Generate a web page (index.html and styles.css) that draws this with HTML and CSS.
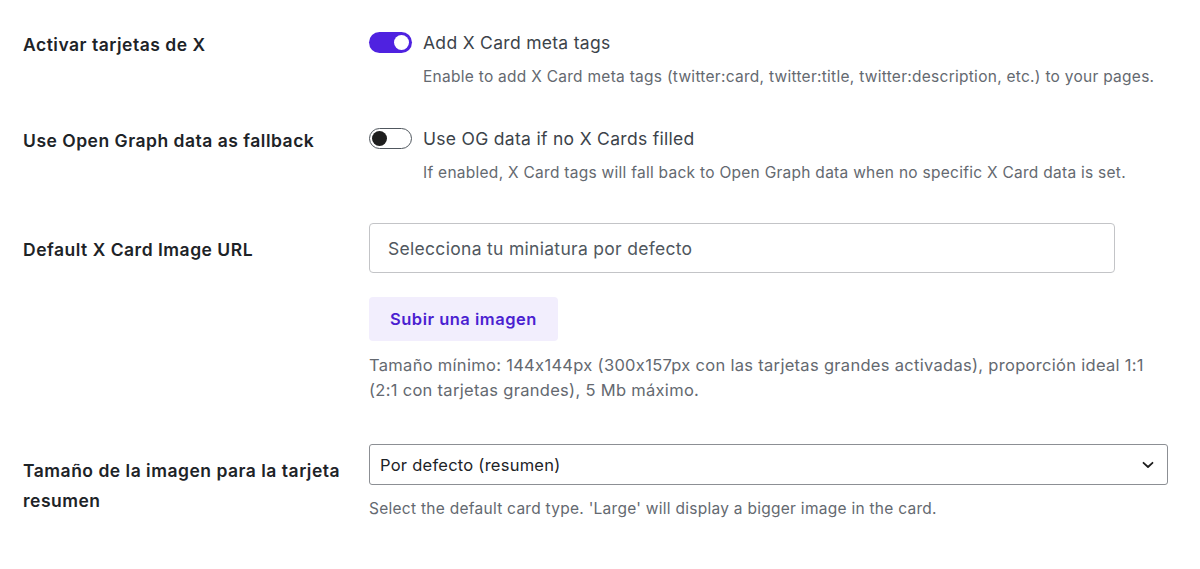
FILE: index.html
```html
<!DOCTYPE html>
<html lang="es">
<head>
<meta charset="utf-8">
<title>X Cards</title>
<link rel="stylesheet" href="styles.css">
</head>
<body>
<main class="form">
  <div class="row row-1">
    <div class="label">Activar tarjetas de X</div>
    <div class="field">
      <div class="toggle-line">
        <span class="toggle on"><span class="knob"></span></span>
        <span class="toggle-text">Add X Card meta tags</span>
      </div>
      <p class="desc indent">Enable to add X Card meta tags (twitter:card, twitter:title, twitter:description, etc.) to your pages.</p>
    </div>
  </div>
  <div class="row row-2">
    <div class="label">Use Open Graph data as fallback</div>
    <div class="field">
      <div class="toggle-line">
        <span class="toggle off"><span class="knob"></span></span>
        <span class="toggle-text">Use OG data if no X Cards filled</span>
      </div>
      <p class="desc indent">If enabled, X Card tags will fall back to Open Graph data when no specific X Card data is set.</p>
    </div>
  </div>
  <div class="row row-3">
    <div class="label">Default X Card Image URL</div>
    <div class="field">
      <div class="text-input">Selecciona tu miniatura por defecto</div>
      <button class="upload" type="button">Subir una imagen</button>
      <p class="desc long">Tamaño mínimo: 144x144px (300x157px con las tarjetas grandes activadas), proporción ideal 1:1 (2:1 con tarjetas grandes), 5 Mb máximo.</p>
    </div>
  </div>
  <div class="row row-4">
    <div class="label">Tamaño de la imagen para la tarjeta resumen</div>
    <div class="field">
      <div class="select">
        <span>Por defecto (resumen)</span>
        <svg class="chev" width="12" height="8" viewBox="0 0 12 8"><path d="M1.5 1.8 L6 6 L10.5 1.8" fill="none" stroke="#1e1e1e" stroke-width="1.8" stroke-linecap="round" stroke-linejoin="round"/></svg>
      </div>
      <p class="desc">Select the default card type. 'Large' will display a bigger image in the card.</p>
    </div>
  </div>
</main>
</body>
</html>
```

FILE: styles.css
```css
* { box-sizing: border-box; }
html, body { margin: 0; background: #ffffff; }
body {
  font-family: Inter, "Noto Sans", "Liberation Sans", sans-serif;
  font-feature-settings: "calt" 0;
  color: #1d2327;
  padding: 0 0 0 23px;
}
.form { display: flex; flex-direction: column; }
.row {
  display: grid;
  grid-template-columns: 346px 1fr;
}
.label {
  font-size: 17.5px;
  font-weight: 600;
  letter-spacing: 0.5px;
  line-height: 30px;
  padding-right: 6px;
  color: #1d2327;
}
.field { min-width: 0; }

.row-1 { margin-top: 30px; }
.row-2 { margin-top: 38px; }
.row-3 { margin-top: 39px; }
.row-3 .label { padding-top: 12px; }
.row-4 { margin-top: 41px; }
.row-4 .label { padding-top: 12px; }

.toggle-line {
  display: flex;
  align-items: center;
  height: 24px;
  gap: 11px;
}
.toggle {
  width: 43px;
  height: 21px;
  border-radius: 11px;
  display: flex;
  align-items: center;
  padding: 0 3px;
  flex: none;
}
.toggle .knob {
  width: 15px;
  height: 15px;
  border-radius: 50%;
}
.toggle.on { background: #4f22e0; justify-content: flex-end; }
.toggle.on .knob { background: #ffffff; }
.toggle.off { background: #ffffff; border: 1px solid #50575e; justify-content: flex-start; padding: 0 2px; }
.toggle.off .knob { background: #1e1e1e; }
.toggle-text {
  font-size: 17.5px;
  letter-spacing: 0.3px;
  color: #3c434a;
}
.desc {
  margin: 12px 0 0;
  font-size: 15.5px;
  letter-spacing: 0.27px;
  line-height: 22px;
  color: #646970;
}
.desc.indent { margin-left: 54px; }
.desc.long {
  font-size: 16.5px;
  letter-spacing: 0.3px;
  line-height: 25px;
  margin-top: 12px;
  max-width: 795px;
}

.text-input {
  width: 746px;
  height: 50px;
  border: 1px solid #c3c4c7;
  border-radius: 4px;
  display: flex;
  align-items: center;
  padding: 0 18px;
  font-size: 17.5px;
  letter-spacing: 0.3px;
  color: #50575e;
}
.upload {
  display: block;
  margin-top: 24px;
  height: 44px;
  padding: 0 21px;
  border: none;
  border-radius: 4px;
  background: #f2eefd;
  color: #4b1fd1;
  font-family: inherit;
  font-feature-settings: "calt" 0;
  font-size: 16.5px;
  letter-spacing: 0.5px;
  font-weight: 600;
}
.select {
  width: 799px;
  height: 41px;
  border: 1px solid #8c8f94;
  border-radius: 3px;
  display: flex;
  align-items: center;
  justify-content: space-between;
  padding: 0 13px 0 10px;
  font-size: 16.5px;
  letter-spacing: 0.25px;
  color: #1d2327;
}
.chev { flex: none; }
.row-4 .desc { margin-top: 13px; }
```
